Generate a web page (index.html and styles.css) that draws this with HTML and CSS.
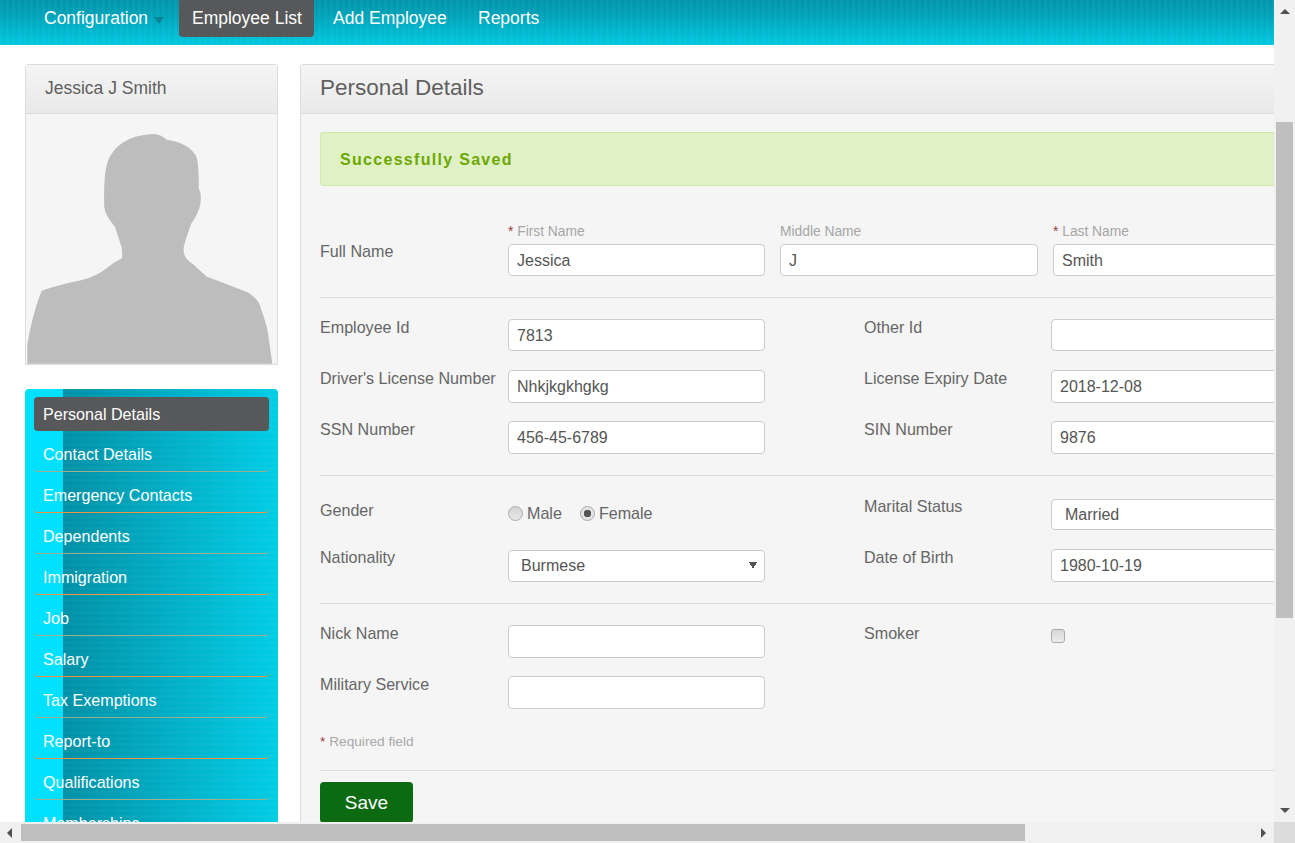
FILE: index.html
```html
<!DOCTYPE html>
<html lang="en">
<head>
<meta charset="utf-8">
<title>Personal Details</title>
<link rel="stylesheet" href="styles.css">
</head>
<body>
<div class="shell">
  <div class="viewport">
    <nav class="topnav">
      <a class="topnav-item config">Configuration<span class="caret"></span></a>
      <a class="topnav-item active">Employee List</a>
      <a class="topnav-item add">Add Employee</a>
      <a class="topnav-item reports">Reports</a>
    </nav>
    <div class="content">
      <aside class="sidebar">
        <section class="profile">
          <h2 class="profile-name">Jessica J Smith</h2>
          <div class="photo">
            <svg class="silhouette" viewBox="78 12 754 750" aria-hidden="true">
              <path d="M82 762 L82 705 Q95 620 124 545 Q135 535 240 512 Q290 500 320 475 Q340 458 366 445 Q370 420 360 395 Q350 365 345 350 Q315 315 313 290 Q310 190 325 150 Q355 80 450 72 Q480 70 500 88 Q570 100 590 140 Q597 160 597 235 Q608 255 600 290 Q590 320 575 340 Q560 380 552 410 Q548 440 570 455 Q590 470 620 500 Q700 530 745 548 Q780 570 785 600 Q800 640 805 670 L818 762 Z"/>
            </svg>
          </div>
        </section>
        <ul class="sidenav">
          <li class="side-item current">Personal Details</li>
          <li class="side-item">Contact Details</li>
          <li class="side-item orange">Emergency Contacts</li>
          <li class="side-item">Dependents</li>
          <li class="side-item orange">Immigration</li>
          <li class="side-item">Job</li>
          <li class="side-item orange">Salary</li>
          <li class="side-item">Tax Exemptions</li>
          <li class="side-item orange">Report-to</li>
          <li class="side-item">Qualifications</li>
          <li class="side-item orange">Memberships</li>
        </ul>
      </aside>
      <main class="panel">
        <h1 class="panel-title">Personal Details</h1>
        <div class="panel-body">
          <div class="alert">Successfully Saved</div>
          <form>
            <div class="section name-section">
              <div class="name-row">
                <label class="label name-label">Full Name</label>
                <div class="name-field"><span class="caption"><span class="req">*</span> First Name</span><input class="input" value="Jessica"></div>
                <div class="name-field"><span class="caption">Middle Name</span><input class="input" value="J"></div>
                <div class="name-field"><span class="caption"><span class="req">*</span> Last Name</span><input class="input" value="Smith"></div>
              </div>
            </div>
            <div class="section">
              <div class="row">
                <label class="label">Employee Id</label><input class="input short" value="7813">
                <label class="label">Other Id</label><input class="input short" value="">
              </div>
              <div class="row">
                <label class="label">Driver's License Number</label><input class="input" value="Nhkjkgkhgkg">
                <label class="label">License Expiry Date</label><input class="input" value="2018-12-08">
              </div>
              <div class="row last">
                <label class="label">SSN Number</label><input class="input" value="456-45-6789">
                <label class="label">SIN Number</label><input class="input" value="9876">
              </div>
            </div>
            <div class="section personal-section">
              <div class="row">
                <label class="label gender-label">Gender</label>
                <div class="radios">
                  <label class="radio-label"><input class="radio" type="radio" name="gender">Male</label>
                  <label class="radio-label"><input class="radio" type="radio" name="gender" checked>Female</label>
                </div>
                <label class="label">Marital Status</label>
                <select class="input select marital"><option>Married</option></select>
              </div>
              <div class="row last">
                <label class="label">Nationality</label>
                <select class="input select"><option>Burmese</option></select>
                <label class="label">Date of Birth</label><input class="input raised" value="1980-10-19">
              </div>
            </div>
            <div class="section extra-section">
              <div class="row">
                <label class="label">Nick Name</label><input class="input" value="">
                <label class="label">Smoker</label><input class="check" type="checkbox">
              </div>
              <div class="row last">
                <label class="label">Military Service</label><input class="input" value="">
              </div>
              <p class="required"><span class="req">*</span> Required field</p>
            </div>
            <button class="save" type="button">Save</button>
          </form>
        </div>
      </main>
    </div>
  </div>
  <div class="vbar">
    <span class="arrow up"></span>
    <span class="vthumb"></span>
    <span class="arrow down"></span>
  </div>
  <div class="hbar">
    <span class="arrow left"></span>
    <span class="hthumb"></span>
    <span class="arrow right"></span>
  </div>
  <div class="corner"></div>
</div>
</body>
</html>
```

FILE: styles.css
```css
* { box-sizing: border-box; }
html, body { margin: 0; height: 100%; overflow: hidden; background: #fff; }
body { font-family: "Liberation Sans", Arial, sans-serif; font-size: 16px; color: #666; }

.shell { display: grid; grid-template-columns: 1274px 21px; grid-template-rows: 822px 21px; width: 1295px; height: 843px; }
.viewport { overflow: hidden; background: #fff; }

/* top navigation */
.topnav {
  display: flex; align-items: flex-start; height: 45px; padding-left: 31px;
  background:
    repeating-linear-gradient(90deg, rgba(255,255,255,.035) 0 3px, rgba(255,255,255,0) 3px 6px),
    linear-gradient(180deg, #0095ab 0%, #00a3b9 35%, #00c8e0 100%);
}
.topnav-item { display: block; height: 37px; padding: 0 13px; color: #fff; font-size: 17.5px; line-height: 36px; white-space: nowrap; }
.topnav-item.config { margin-right: 3px; padding-right: 0; width: 145px; }
.topnav-item.active { background: #575859; border-radius: 0 0 4px 4px; width: 135px; margin-right: 6px; }
.topnav-item.add { width: 140px; margin-right: 5px; }
.caret { display: inline-block; width: 0; height: 0; margin-left: 6px; border: 5px solid transparent; border-top: 7px solid #0b8294; border-bottom: 0; vertical-align: 0; }

/* layout */
.content { display: flex; align-items: flex-start; gap: 22px; padding: 19px 0 0 25px; }
.sidebar { flex: none; width: 253px; }

.profile { border: 1px solid #dcdcdc; border-radius: 3px 3px 0 0; background: #f5f5f5; }
.profile-name {
  margin: 0; height: 49px; padding-left: 19px; border-bottom: 1px solid #dcdcdc;
  background: linear-gradient(180deg, #f5f5f5, #e9e9e9);
  font-size: 17.5px; font-weight: 400; line-height: 46px; color: #5f5f5f;
}
.photo { height: 250px; display: flex; }
.silhouette { width: 251px; height: 250px; fill: #bdbdbd; display: block; }

.sidenav {
  list-style: none; margin: 24px 0 0; padding: 8px 9px 0; border-radius: 4px 4px 0 0;
  background:
    linear-gradient(90deg, #00e1ff 0 38px, rgba(0,225,255,0) 38px),
    repeating-linear-gradient(180deg, rgba(255,255,255,.03) 0 3px, rgba(255,255,255,0) 3px 6px),
    linear-gradient(90deg, #0090a6 0 38px, #0090a6 38px, #00cde6 100%);
}
.side-item { height: 41px; padding: 13px 0 0 9px; color: #fff; font-size: 16.1px; line-height: 20px; border-bottom: 1px solid #9fae8f; border-radius: 0 0 4px 4px; white-space: nowrap; }
.side-item.orange { border-bottom-color: #f0933f; }
.side-item.current { height: 34px; padding-top: 7px; background: #575859; border: 0; border-radius: 4px; }

/* main panel */
.panel { flex: none; width: 1040px; border: 1px solid #dcdcdc; border-radius: 3px 3px 0 0; background: #f5f5f5; }
.panel-title {
  margin: 0; height: 49px; padding-left: 19px; border-bottom: 1px solid #dcdcdc;
  background: linear-gradient(180deg, #f5f5f5, #e9e9e9);
  font-size: 22.5px; font-weight: 400; line-height: 46px; color: #5f5f5f;
}
.panel-body { padding: 18px 19px 20px; }
.alert {
  height: 54px; padding-left: 19px; background: #e0f1c6; border: 1px solid #cfe9a8; border-radius: 3px;
  color: #6da800; font-size: 16px; font-weight: 700; letter-spacing: 1.3px; line-height: 54px;
}

.section { padding: 21px 0; border-bottom: 1px solid #dcdcdc; }
.name-section { padding: 36px 0 21px; }
.personal-section { padding: 23px 0 20px; }
.extra-section { padding-bottom: 0; }

.name-row { display: grid; grid-template-columns: 173px 257px 258px 257px; column-gap: 15px; }
.name-label { padding-top: 21px; }
.name-field { display: flex; flex-direction: column; }
.name-field .input { height: 32px; padding-top: 2px; }
.caption { height: 22px; font-size: 13.8px; line-height: 20px; color: #a6a6a6; }
.req { color: #9b3a3a; }

.row { display: grid; grid-template-columns: 188px 257px 286px 257px; height: 51px; }
.row.last { height: 33px; }
.row > .label:nth-child(3) { padding-left: 99px; }
.label { display: block; font-size: 16.1px; line-height: 16px; color: #666; white-space: nowrap; }
.personal-section .label { margin-top: -1px; }
.personal-section .gender-label { padding-top: 4px; }

.input {
  display: block; width: 100%; height: 33px; padding: 0 8px; border: 1px solid #ccc; border-radius: 4px;
  background: #fff; font: 16px "Liberation Sans", Arial, sans-serif; color: #555; outline: 0;
}
.input.short { height: 32px; padding-top: 2px; }
.raised { margin-top: -1px; }
.select {
  appearance: none; -webkit-appearance: none; height: 32px; padding: 0 0 2px 12px;
  background-color: #fff;
  background-image: linear-gradient(to bottom left, #555 50%, transparent 50%), linear-gradient(to bottom right, #555 50%, transparent 50%);
  background-size: 4px 7px, 4px 7px;
  background-position: 240px 11px, 244px 11px;
  background-repeat: no-repeat;
}
.marital { height: 31px; padding: 0 0 0 13px; }

.radios { display: flex; gap: 18px; padding-top: 6px; }
.radio-label { display: flex; align-items: center; height: 16px; line-height: 16px; font-size: 16.1px; color: #666; }
.radio {
  appearance: none; -webkit-appearance: none; width: 15px; height: 15px; margin: 0 4px 0 0; border: 1px solid #aaa; border-radius: 50%;
  background: linear-gradient(180deg, #d4d4d4, #e8e8e8); display: block;
}
.radio:checked { background: radial-gradient(circle, #555 0 3.5px, #e4e4e4 4px); }
.check {
  appearance: none; -webkit-appearance: none; width: 14px; height: 14px; margin: 4px 0 0; border: 1px solid #aaa; border-radius: 3px;
  background: linear-gradient(180deg, #d8d8d8, #ececec); display: block;
}

.required { margin: 23px 0 0; height: 38px; font-size: 13.7px; line-height: 20px; color: #a9a9a9; }
.save {
  display: block; width: 93px; height: 41px; margin-top: 11px; border: 0; border-radius: 4px; background: #0b6a12;
  color: #fff; font: 19px "Liberation Sans", Arial, sans-serif; padding: 0;
}

/* scrollbars */
.vbar { display: flex; flex-direction: column; align-items: center; background: #f1f1f1; padding: 9px 0 9px; }
.hbar { display: flex; align-items: center; background: #f0f0f0; padding: 0 7px; height: 21px; }
.corner { background: #dcdcdc; }
.vthumb { width: 17px; height: 496px; margin-top: 108px; background: #bfbfbf; }
.hthumb { width: 1004px; height: 17px; margin-left: 9px; background: #bfbfbf; }
.arrow { display: block; width: 0; height: 0; border: 5px solid transparent; }
.arrow.up { border-top: 0; border-bottom-color: #505050; }
.arrow.down { margin-top: auto; border-bottom: 0; border-top-color: #505050; }
.arrow.left { border-left: 0; border-right-color: #505050; }
.arrow.right { margin-left: auto; margin-right: 1px; border-right: 0; border-left-color: #505050; }
```
